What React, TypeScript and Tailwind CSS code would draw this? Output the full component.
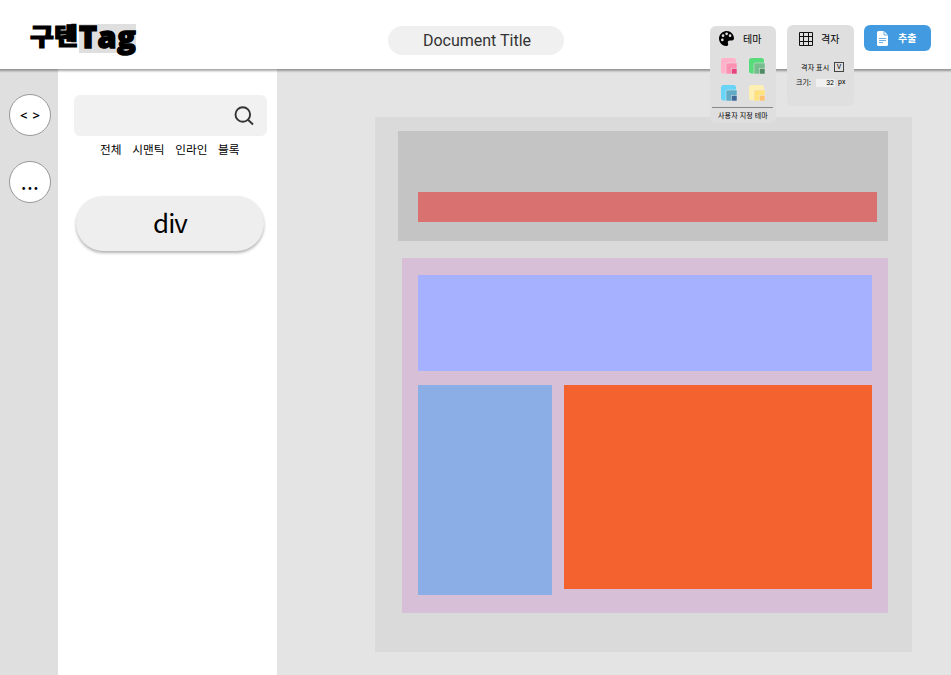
import React from "react";

const sans = "font-['Roboto','Noto_Sans_CJK_KR',sans-serif]";
const kr = "font-['Noto_Sans_CJK_KR',sans-serif]";

function Swatch({ back, mid, front }: { back: string; mid: string; front: string }) {
  return (
    <svg className="block h-4 w-4" viewBox="0 0 16 16">
      <rect width="15" height="15.500" rx="2.500" fill={back} />
      <path d="M5 16V6.500A1.500 1.500 0 0 1 6.500 5H16V16Z" fill={mid} stroke="#e7eaea" strokeWidth=".5" />
      <rect x="10.500" y="10.500" width="5.500" height="5.500" fill={front} stroke="#e7eaea" strokeWidth=".5" />
    </svg>
  );
}

function ThemePanel() {
  return (
    <section className="relative z-10 h-[97px] w-[66px] shrink-0 rounded-[6px] bg-[#dfdfdf]">
      <div className="flex h-[25px] items-center pl-[9px]">
        <svg className="h-[15px] w-[15px] shrink-0" viewBox="0 0 512 512">
          <path fillRule="evenodd" d="M204.300 5C104.900 24.400 24.800 104.300 5.200 203.400c-37 187 131.700 326.400 258.800 306.700 41.200-6.400 61.400-54.600 42.500-91.700-23.100-45.400 9.900-98.400 60.900-98.400h79.700c35.800 0 64.800-29.600 64.900-65.300C511.500 97.100 368.100-26.900 204.300 5zM114 352a46 46 0 1 1 0-92 46 46 0 0 1 0 92zM138 205a46 46 0 1 1 0-92 46 46 0 0 1 0 92zM260 142a46 46 0 1 1 0-92 46 46 0 0 1 0 92zM378 205a46 46 0 1 1 0-92 46 46 0 0 1 0 92z" />
        </svg>
        <span className={`${kr} ml-[9px] text-[10px] leading-none`}>테마</span>
      </div>
      <div className="mt-[7px] ml-[11px] grid w-[44px] grid-cols-2 gap-x-3 gap-y-[11px]">
        <Swatch back="#ffb2c9" mid="#fc91b2" front="#e64580" />
        <Swatch back="#58db7a" mid="#75bd8c" front="#508a63" />
        <Swatch back="#68d4f7" mid="#61abc6" front="#3d6898" />
        <Swatch back="#fff0b2" mid="#ffe27d" front="#ffc36f" />
      </div>
      <div className="mt-[6px] ml-[2px] h-px w-[61px] bg-[#888]" />
      <div className={`${kr} mt-[3px] text-center text-[7px] leading-[8px] tracking-[0.2px] whitespace-nowrap`}>사용자 지정 테마</div>
    </section>
  );
}

function GridPanel() {
  return (
    <section className="relative z-10 h-[81px] w-[67px] shrink-0 rounded-[6px] bg-[#dfdfdf]">
      <div className="flex h-[27px] items-center pl-[12px]">
        <svg className="h-[14px] w-[14px] shrink-0" viewBox="0 0 14 14" fill="none" stroke="#111" strokeWidth="1">
          <path d="M.5.5h13v13H.5zM4.500 0v14M9.500 0v14M0 4.500h14M0 9.500h14" />
        </svg>
        <span className={`${kr} ml-[8px] text-[10px] leading-none`}>격자</span>
      </div>
      <div className="mt-[10px] flex h-[10px] items-center pl-[14px]">
        <span className={`${kr} text-[7px] leading-none tracking-[0.2px] whitespace-nowrap`}>격자 표시</span>
        <span className={`${sans} ml-auto mr-[10px] flex h-[10px] w-[10px] items-center justify-center border border-[#444] text-[7px] leading-none`}>V</span>
      </div>
      <div className="mt-[6px] flex h-[9px] items-center pl-[9px] text-[7px] leading-none">
        <span className={`${kr} w-[20px]`}>크기:</span>
        <span className={`${sans} h-[8px] w-[19px] bg-[#f0f0f0] pr-[1px] text-right leading-[9px]`}>32</span>
        <span className={`${sans} ml-[3px]`}>px</span>
      </div>
    </section>
  );
}

function Header() {
  return (
    <header className="relative z-10 flex h-[69px] items-start bg-white shadow-[0_1px_2px_1px_rgba(0,0,0,0.35)]">
      <div className="mt-6 ml-[30px] flex h-[29px] w-[107px] whitespace-nowrap">
        <span className={`${kr} w-[49px] origin-top -translate-y-px scale-y-90 text-[26px] leading-[25px] font-black [-webkit-text-stroke:1.3px_black]`}>구텐</span>
        <span className="h-[29px] w-[57px] bg-[#dfdfdf] font-['Open_Sans',sans-serif] text-[30.500px] leading-[24px] font-extrabold tracking-[0.6px] [-webkit-text-stroke:1.5px_black]">Tag</span>
      </div>
      <div className={`${sans} mt-[26px] ml-[251px] flex h-[29px] w-[176px] items-center justify-center rounded-full bg-[#f0f0f0] pl-[2px] text-[16px] text-[#333]`}>Document Title</div>
      <div className="mt-[26px] ml-[146px]"><ThemePanel /></div>
      <div className="mt-[25px] ml-[11px]"><GridPanel /></div>
      <button className="mt-[25px] ml-[10px] flex h-[26px] w-[67px] items-center rounded-[6px] bg-[#429be0] pl-[13px] text-white">
        <svg className="h-[15px] w-[11px]" viewBox="0 0 11 15">
          <path d="M1.500 0H7l4 4v9.500a1.500 1.500 0 0 1-1.500 1.500h-8A1.500 1.500 0 0 1 0 13.500v-12A1.500 1.500 0 0 1 1.500 0z" fill="white" />
          <path d="M7 0v4h4M2 7.500h7M2 9.500h7M2 11.500h4" stroke="#429be0" strokeWidth=".8" fill="none" />
        </svg>
        <span className={`${kr} ml-[10px] text-[10px] leading-none font-bold`}>추출</span>
      </button>
    </header>
  );
}

export default function App() {
  return (
    <div className={`${sans} flex h-[675px] w-[951px] flex-col overflow-hidden bg-[#e4e4e4] text-black`}>
      <Header />
      <div className="flex min-h-0 flex-1">
        <nav className="flex w-[58px] shrink-0 flex-col items-center gap-[25px] bg-[#dfdfdf] pt-[25px] pl-[2px]">
          <button className="flex h-[42px] w-[42px] items-center justify-center rounded-full border border-[#999] bg-white font-['Noto_Sans'] text-[13px] leading-none font-semibold [word-spacing:1.5px]">&lt; &gt;</button>
          <button className="flex h-[42px] w-[42px] items-end justify-center rounded-full border border-[#999] bg-white pb-[11px]">
            <span className={`${kr} text-[21px] leading-[20px] tracking-[0.400px]`}>...</span>
          </button>
        </nav>
        <aside className="w-[219px] shrink-0 bg-white">
          <div className="mt-[26px] ml-4 flex h-[41px] w-[193px] items-center justify-end rounded-[6px] bg-[#f1f1f1] pr-[13px]">
            <svg className="h-5 w-5" viewBox="0 0 20 20" fill="none" stroke="#333" strokeWidth="1.900">
              <circle cx="8.800" cy="8.500" r="7.300" /><path d="m14 13.700 5 4.800" />
            </svg>
          </div>
          <div className={`${kr} mt-[5px] ml-[42px] flex h-[16px] gap-[10.700px] text-[11.700px] leading-[16px] whitespace-nowrap`}>
            <span>전체</span><span>시맨틱</span><span>인라인</span><span>블록</span>
          </div>
          <div className={`${kr} mt-[39px] ml-[18px] flex h-[55px] w-[188px] items-center justify-center rounded-full bg-[#eee] pb-[4px] text-[26px] leading-none tracking-[-1px] shadow-[0_2px_3px_rgba(0,0,0,0.3)]`}>div</div>
        </aside>
        <main className="min-w-0 flex-1 pt-[48px] pl-[98px]">
          <div className="h-[535px] w-[537px] bg-[#dadada] pt-[14px] pl-[23px]">
            <div className="h-[110px] w-[490px] bg-[#c4c4c4] pt-[61px] pl-[20px]">
              <div className="h-[30px] w-[459px] bg-[#d97171]" />
            </div>
            <div className="mt-[17px] ml-[4px] h-[355px] w-[486px] bg-[#d7bfd7] pt-[17px] pl-[16px]">
              <div className="h-[96px] w-[454px] bg-[#a6b1ff]" />
              <div className="mt-[14px] flex items-start gap-[12px]">
                <div className="h-[210px] w-[134px] bg-[#8caee6]" />
                <div className="h-[204px] w-[308px] bg-[#f46230]" />
              </div>
            </div>
          </div>
        </main>
      </div>
    </div>
  );
}
